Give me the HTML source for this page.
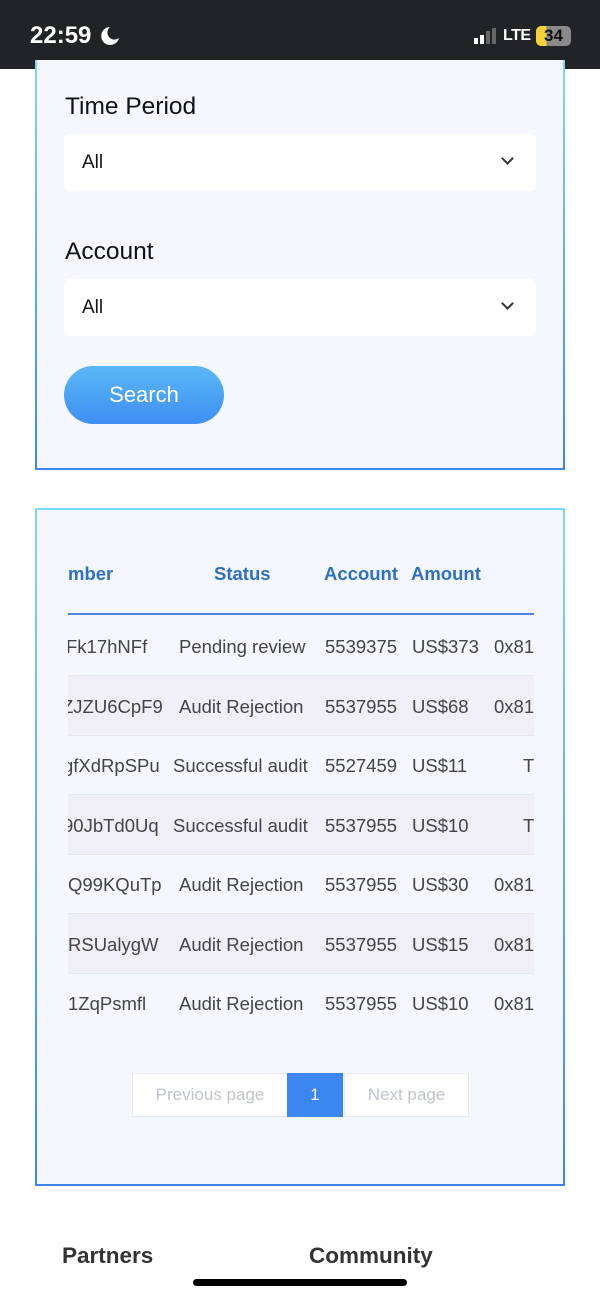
<!DOCTYPE html>
<html><head><meta charset="utf-8"><style>
body{margin:0;width:600px;height:1299px;background:#fff;font-family:"Liberation Sans",sans-serif;position:relative;overflow:hidden}
.sb{position:absolute;top:0;left:0;width:600px;height:69px;background:#222326;color:#fff}
.card{position:absolute;left:35px;width:526px;background:#f4f7fe;border:2px solid;border-image:linear-gradient(#7fd6f7,#3d86f2) 1}
.lbl{position:absolute;left:28px;font-size:24.5px;color:#111}
.sel{position:absolute;left:27px;width:472px;height:57px;background:#fff;border-radius:6px}
.sel span{position:absolute;left:18px;top:18px;font-size:19px;color:#111}
.sel i{position:absolute;right:24px;top:20px;width:7px;height:7px;border-right:2.5px solid #333;border-bottom:2.5px solid #333;transform:rotate(45deg)}
.t{position:absolute;font-size:18.5px;color:#444;white-space:nowrap}
.h{position:absolute;font-size:18.5px;color:#2f6fc4;font-weight:bold}
.row{position:absolute;left:31px;width:466px;height:59px;border-bottom:1px solid #e6e6ee}
</style></head><body>
<div class="sb">
<div style="position:absolute;left:30px;top:22px;font-size:24px;font-weight:bold">22:59</div>
<svg style="position:absolute;left:99px;top:25px" width="22" height="22" viewBox="0 0 22 22"><path d="M11 2 A9 9 0 1 0 20 13 A7 7 0 0 1 11 2Z" fill="#fff"/></svg>
<div style="position:absolute;left:474px;top:38px;width:4px;height:6px;background:#fff"></div>
<div style="position:absolute;left:480px;top:35px;width:4px;height:9px;background:#fff"></div>
<div style="position:absolute;left:486px;top:31px;width:4px;height:13px;background:#666"></div>
<div style="position:absolute;left:492px;top:28px;width:4px;height:16px;background:#666"></div>
<div style="position:absolute;left:503px;top:27px;font-size:16px;font-weight:bold;letter-spacing:-0.5px">LTE</div>
<div style="position:absolute;left:536px;top:26px;width:35px;height:20px;border-radius:5px;background:linear-gradient(90deg,#f5d13a 0 30%,#8a8a8a 30%);color:#111;font-size:17px;font-weight:bold;text-align:center;line-height:20px">34</div>
</div>
<div class="card" style="top:60px;height:408px;border-top:none">
<div class="lbl" style="top:33px">Time Period</div>
<div class="sel" style="top:74px"><span>All</span><i></i></div>
<div class="lbl" style="top:178px">Account</div>
<div class="sel" style="top:219px"><span>All</span><i></i></div>
<div style="position:absolute;left:27px;top:306px;width:160px;height:58px;border-radius:29px;background:linear-gradient(#5bb8f7,#3f8ef2);color:#fff;font-size:22px;text-align:center;line-height:58px">Search</div>
</div>
<div class="card" style="top:508px;height:674px">
<div class="h" style="left:31px;top:53px">mber</div>
<div class="h" style="left:177px;top:53px">Status</div>
<div class="h" style="left:287px;top:53px">Account</div>
<div class="h" style="left:374px;top:53px">Amount</div>
<div style="position:absolute;left:31px;top:103px;width:466px;height:2px;background:#4f86d6"></div>
<div class="row" style="top:106px"></div>
<div class="row" style="top:166px;background:#f1eff6"></div>
<div class="row" style="top:225px"></div>
<div class="row" style="top:285px;background:#f1eff6"></div>
<div class="row" style="top:344px"></div>
<div class="row" style="top:404px;background:#f1eff6"></div>
<div class="row" style="top:463px;border:none"></div>
<div style="position:absolute;left:31px;top:106px;width:466px;height:420px;overflow:hidden">
<div class="t" style="left:-2px;top:20px">Fk17hNFf</div><div class="t" style="left:111px;top:20px">Pending review</div><div class="t" style="left:257px;top:20px">5539375</div><div class="t" style="left:344px;top:20px">US$373</div><div class="t" style="left:426px;top:20px">0x81</div>
<div class="t" style="left:-6px;top:80px">ZJZU6CpF9</div><div class="t" style="left:111px;top:80px">Audit Rejection</div><div class="t" style="left:257px;top:80px">5537955</div><div class="t" style="left:344px;top:80px">US$68</div><div class="t" style="left:426px;top:80px">0x81</div>
<div class="t" style="left:-5px;top:139px">gfXdRpSPu</div><div class="t" style="left:105px;top:139px">Successful audit</div><div class="t" style="left:257px;top:139px">5527459</div><div class="t" style="left:344px;top:139px">US$11</div><div class="t" style="left:455px;top:139px">T</div>
<div class="t" style="left:-5px;top:199px">90JbTd0Uq</div><div class="t" style="left:105px;top:199px">Successful audit</div><div class="t" style="left:257px;top:199px">5537955</div><div class="t" style="left:344px;top:199px">US$10</div><div class="t" style="left:455px;top:199px">T</div>
<div class="t" style="left:0px;top:258px">Q99KQuTp</div><div class="t" style="left:111px;top:258px">Audit Rejection</div><div class="t" style="left:257px;top:258px">5537955</div><div class="t" style="left:344px;top:258px">US$30</div><div class="t" style="left:426px;top:258px">0x81</div>
<div class="t" style="left:0px;top:318px">RSUalygW</div><div class="t" style="left:111px;top:318px">Audit Rejection</div><div class="t" style="left:257px;top:318px">5537955</div><div class="t" style="left:344px;top:318px">US$15</div><div class="t" style="left:426px;top:318px">0x81</div>
<div class="t" style="left:0px;top:377px">1ZqPsmfl</div><div class="t" style="left:111px;top:377px">Audit Rejection</div><div class="t" style="left:257px;top:377px">5537955</div><div class="t" style="left:344px;top:377px">US$10</div><div class="t" style="left:426px;top:377px">0x81</div>
</div>
<div style="position:absolute;left:95px;top:563px;width:154px;height:42px;background:#fff;border:1px solid #e8e8ee;color:#c0c4cc;font-size:17px;text-align:center;line-height:42px">Previous page</div>
<div style="position:absolute;left:250px;top:563px;width:56px;height:44px;background:#3b86f0;color:#fff;font-size:17px;text-align:center;line-height:44px">1</div>
<div style="position:absolute;left:307px;top:563px;width:123px;height:42px;background:#fff;border:1px solid #e8e8ee;color:#c0c4cc;font-size:17px;text-align:center;line-height:42px">Next page</div>
</div>
<div style="position:absolute;left:62px;top:1243px;font-size:22.5px;font-weight:bold;color:#333">Partners</div>
<div style="position:absolute;left:309px;top:1243px;font-size:22.5px;font-weight:bold;color:#333">Community</div>
<div style="position:absolute;left:193px;top:1279px;width:214px;height:7px;border-radius:4px;background:#000"></div>
</body></html>
